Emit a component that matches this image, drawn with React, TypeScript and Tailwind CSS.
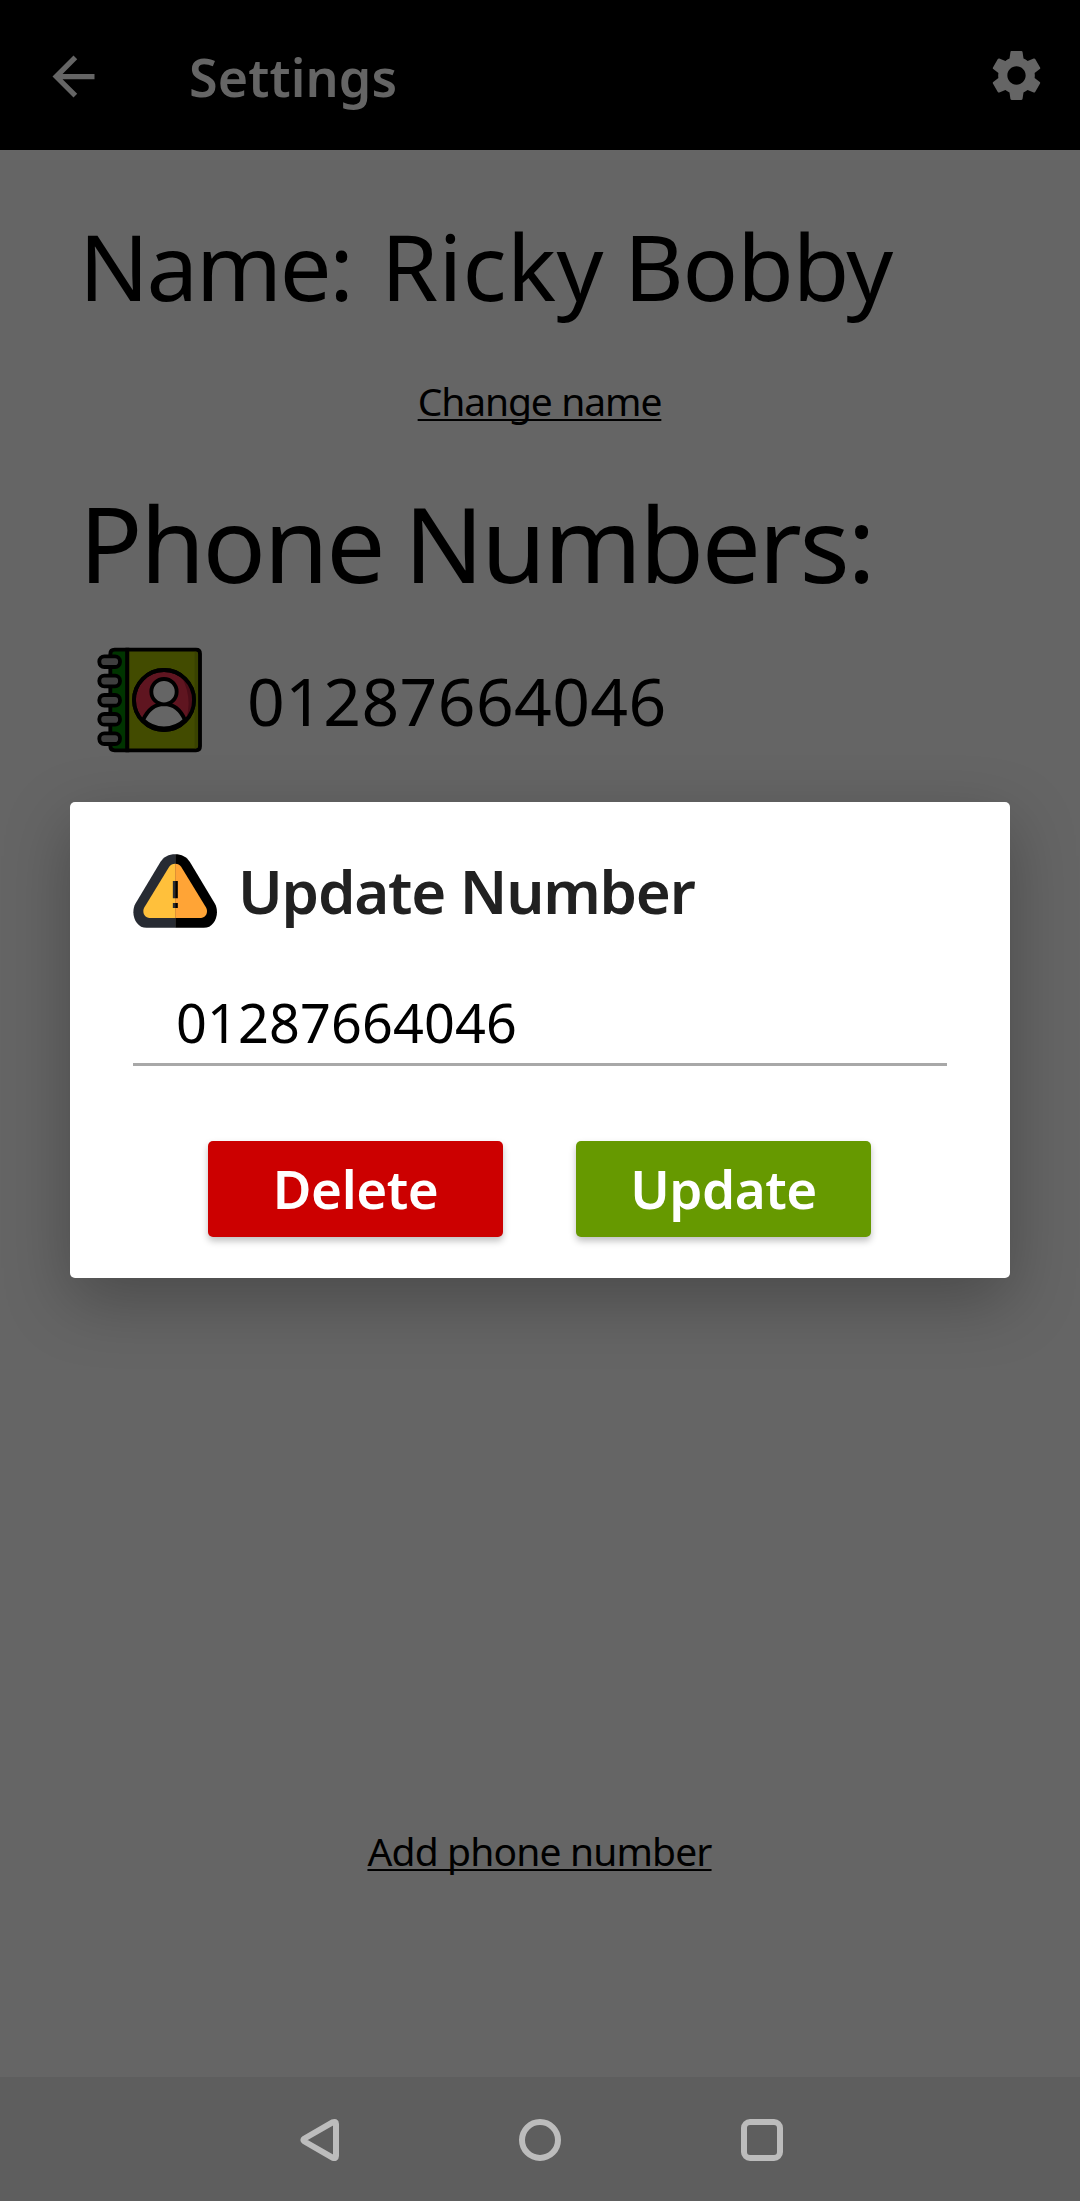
import React from "react";
import { MdArrowBack, MdSettings } from "react-icons/md";

function ContactBook() {
  const rings = [93, 151, 209, 266, 324];
  return (
    <svg className="ml-[97px] h-[106px] w-[106px] shrink-0" viewBox="51 49 318 318" fill="none" stroke="#000" strokeWidth="11.5">
      <path d="M142 57H104Q91 57 91 70V346Q91 359 104 359H142Z" fill="#003400" />
      <path d="M142 57H348Q360 57 360 69V347Q360 359 348 359H142Z" fill="#424b00" />
      <path d="M344 63Q354 63 354 71V345Q354 353 344 353Z" fill="#394200" stroke="none" />
      {rings.map((y) => (
        <rect key={y} x="58" y={y - 16} width="62" height="32" rx="15" fill="#3f3f3f" />
      ))}
      <circle cx="252" cy="208" r="90" fill="#5f1520" />
      <path d="M304 137A88 88 0 0 1 319 264Q338 200 304 137Z" fill="#4a0d18" stroke="none" />
      <path d="M189 268Q212 220 252 220Q294 220 315 268A91 91 0 0 1 189 268Z" fill="#656565" />
      <circle cx="252" cy="183" r="38" fill="#656565" />
      <circle cx="252" cy="208" r="90" />
    </svg>
  );
}

function WarningIcon() {
  return (
    <svg className="h-[74px] w-[84px] shrink-0" viewBox="38 42 253 222">
      <path d="M165 42C146 42 130 50 121 65L46 190C29 220 45 264 79 264H165Z" fill="#272b33" />
      <path d="M165 42C184 42 200 50 209 65L284 190C301 220 285 264 251 264H165Z" fill="#000" />
      <path d="M165 71Q153 71 147 80L72 203C65 215 71 234 87 234H165Z" fill="#ffc03b" />
      <path d="M165 71Q177 71 183 80L258 203C265 215 259 234 243 234H165Z" fill="#ffa436" />
      <path d="M158 123H165V175H158ZM158 189H165V204H158Z" fill="#272b33" />
      <path d="M165 123H173V175H165ZM165 189H173V204H165Z" fill="#000" />
    </svg>
  );
}

export default function App() {
  return (
    <div className="relative flex h-[2201px] w-[1080px] flex-col overflow-hidden bg-[#656565] font-['Noto_Sans',sans-serif] text-black">
      <header className="flex h-[150px] shrink-0 items-center bg-black pt-[3px] text-[#656565]">
        <MdArrowBack className="ml-[42px] size-[63px]" />
        <h1 className="ml-[84px] pt-px text-[52px] leading-[70px] font-semibold tracking-[0.1px]">Settings</h1>
        <MdSettings className="mr-[33px] mb-[2px] ml-auto size-[61px]" />
      </header>

      <main className="flex flex-1 flex-col">
        <div className="mt-[56px] flex pl-[79px] text-[92px] leading-[120px] whitespace-nowrap">
          <span className="w-[302px] tracking-[-2.3px]">Name:</span>
          <span className="tracking-[0.3px] [word-spacing:-4px]">
            Ricky <span className="tracking-[-1.1px]">Bobby</span>
          </span>
        </div>
        <a className="mt-[49px] mr-px self-center text-[39px] leading-[52px] tracking-[-1.1px] underline decoration-2 underline-offset-[3px] [text-decoration-skip-ink:none] [word-spacing:0.5px]">
          Change name
        </a>
        <h2 className="mt-[46px] pl-[79px] text-[105px] leading-[140px] tracking-[-2.4px] whitespace-nowrap [word-spacing:-4px]">
          Phone Numbers:
        </h2>
        <div className="mt-[34px] flex h-[106px] items-center">
          <ContactBook />
          <span className="ml-[44px] text-[66px] leading-[88px] tracking-[0.4px]">01287664046</span>
        </div>
        <a className="mt-auto mr-px mb-[200px] self-center text-[39px] leading-[52px] tracking-[-0.85px] underline decoration-2 underline-offset-[3px] [text-decoration-skip-ink:none]">
          Add phone number
        </a>
      </main>

      <nav className="flex h-[124px] shrink-0 items-center gap-[180px] bg-[#5e5e5e] pt-[2px] pl-[300px]">
        <svg className="h-[44px] w-[39px]" viewBox="0 0 39 44" fill="none" stroke="#bcbcbc" strokeWidth="6" strokeLinejoin="round">
          <path d="M32.500 4.400L4.500 20.500Q2.200 22 4.500 23.500L32.500 39.600Q36 41 36 38V6Q36 3 32.500 4.400Z" />
        </svg>
        <span className="size-[42px] rounded-full border-[6px] border-[#bcbcbc]" />
        <span className="size-[42px] rounded-[9px] border-[6px] border-[#bcbcbc]" />
      </nav>

      <section
        role="dialog"
        className="absolute top-[802px] left-[70px] flex h-[476px] w-[940px] flex-col rounded-[5px] bg-white px-[63px] pt-[52px] shadow-[0_22px_66px_rgba(0,0,0,0.27)]"
      >
        <div className="flex h-[74px] items-center">
          <WarningIcon />
          <h3 className="ml-[21px] text-[60px] leading-[80px] font-semibold tracking-[-1.25px] whitespace-nowrap text-[#212121] [word-spacing:0.5px]">
            Update Number
          </h3>
        </div>
        <div className="mt-[64px] border-b-[3px] border-[#a8a8a8] pb-[11px] pl-[43px] text-[54px] leading-[60px] tracking-[0.1px]">
          01287664046
        </div>
        <div className="mt-[75px] flex gap-[73px] pl-[75px] text-[53px] font-semibold text-white">
          <button className="h-[96px] w-[295px] rounded-[5px] bg-[#cc0000] leading-[70px] tracking-[-0.5px] shadow-[0_4px_7px_rgba(0,0,0,0.25)]">
            Delete
          </button>
          <button className="h-[96px] w-[295px] rounded-[5px] bg-[#669900] leading-[70px] tracking-[-0.5px] shadow-[0_4px_7px_rgba(0,0,0,0.25)]">
            Update
          </button>
        </div>
      </section>
    </div>
  );
}
